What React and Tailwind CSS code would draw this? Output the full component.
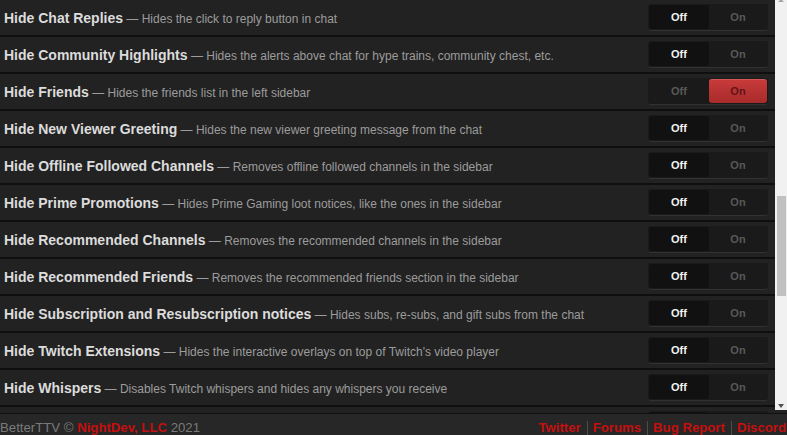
export default function App() {
  const settings = [
    { name: "Hide Chat Replies", desc: "Hides the click to reply button in chat" },
    { name: "Hide Community Highlights", desc: "Hides the alerts above chat for hype trains, community chest, etc." },
    { name: "Hide Friends", desc: "Hides the friends list in the left sidebar", on: true },
    { name: "Hide New Viewer Greeting", desc: "Hides the new viewer greeting message from the chat" },
    { name: "Hide Offline Followed Channels", desc: "Removes offline followed channels in the sidebar" },
    { name: "Hide Prime Promotions", desc: "Hides Prime Gaming loot notices, like the ones in the sidebar" },
    { name: "Hide Recommended Channels", desc: "Removes the recommended channels in the sidebar" },
    { name: "Hide Recommended Friends", desc: "Removes the recommended friends section in the sidebar" },
    { name: "Hide Subscription and Resubscription notices", desc: "Hides subs, re-subs, and gift subs from the chat" },
    { name: "Hide Twitch Extensions", desc: "Hides the interactive overlays on top of Twitch's video player" },
    { name: "Hide Whispers", desc: "Disables Twitch whispers and hides any whispers you receive" },
    { name: "", desc: "", partial: true },
  ];

  const links = ["Twitter", "Forums", "Bug Report", "Discord"];

  return (
    <div className="w-[787px] h-[435px] overflow-hidden flex flex-col bg-[#222] font-['Liberation_Sans',Arial,sans-serif]">
      <div className="flex h-[413px] shrink-0">
        <div className="flex-1 overflow-hidden">
          {settings.map((s, i) => (
            <div
              key={i}
              className="h-[37px] flex items-center justify-between pl-1 pr-[7px] bg-[#222] border-b-2 border-[#0f0f0f]"
            >
              <div className="whitespace-nowrap">
                <span className="text-[14px] font-bold text-[#dcdcdc]">{s.name}</span>
                {s.desc && (
                  <span className="text-[12px] text-[#9c9c9c]"> — {s.desc}</span>
                )}
              </div>
              <div className="w-[120px] h-[27px] flex p-px rounded-[3px] bg-[#1a1a1a] border-b border-[#323232] shrink-0">
                <div
                  className={
                    s.on
                      ? "w-[60px] flex items-center justify-center text-[11px] font-bold text-[#595959]"
                      : "w-[60px] flex items-center justify-center text-[11px] font-bold text-[#f2f2f2] bg-[#111] rounded-[3px]"
                  }
                >
                  {!s.partial && "Off"}
                </div>
                <div
                  className={
                    s.on
                      ? "flex-1 flex items-center justify-center text-[11px] font-bold text-[#5e1616] bg-gradient-to-b from-[#c83a3a] to-[#a82b2b] border-t border-[#d45555] rounded-[3px]"
                      : "flex-1 flex items-center justify-center text-[11px] font-bold text-[#585858]"
                  }
                >
                  {!s.partial && "On"}
                </div>
              </div>
            </div>
          ))}
        </div>
        <div className="w-[12px] h-[410px] bg-[#f1f1f1] flex flex-col items-center">
          <div className="w-0 h-0 border-x-[3.5px] border-x-transparent border-b-[3px] border-b-[#a3a3a3] -mt-[1px]" />
          <div className="w-[9px] h-[100px] bg-[#c1c1c1] mt-[194px]" />
          <div className="mt-auto mb-[2px] w-0 h-0 border-x-[3.5px] border-x-transparent border-t-[4px] border-t-[#505050]" />
        </div>
      </div>
      <div className="flex-1 flex items-start justify-between bg-[#272727] border-t border-[#101010] pt-[6px] text-[13.2px] leading-[16px]">
        <div className="text-[#7a7a7a] whitespace-nowrap">
          BetterTTV © <span className="font-bold text-[#c40f0f]">NightDev, LLC</span> 2021
        </div>
        <div className="flex items-start whitespace-nowrap pr-px">
          {links.map((l, i) => (
            <div key={l} className="flex items-start">
              {i > 0 && <span className="w-px h-[16px] mt-[1px] bg-[#4d4d4d] ml-[6px] mr-[5px]" />}
              <span className="font-bold text-[#c40f0f]">{l}</span>
            </div>
          ))}
        </div>
      </div>
    </div>
  );
}
